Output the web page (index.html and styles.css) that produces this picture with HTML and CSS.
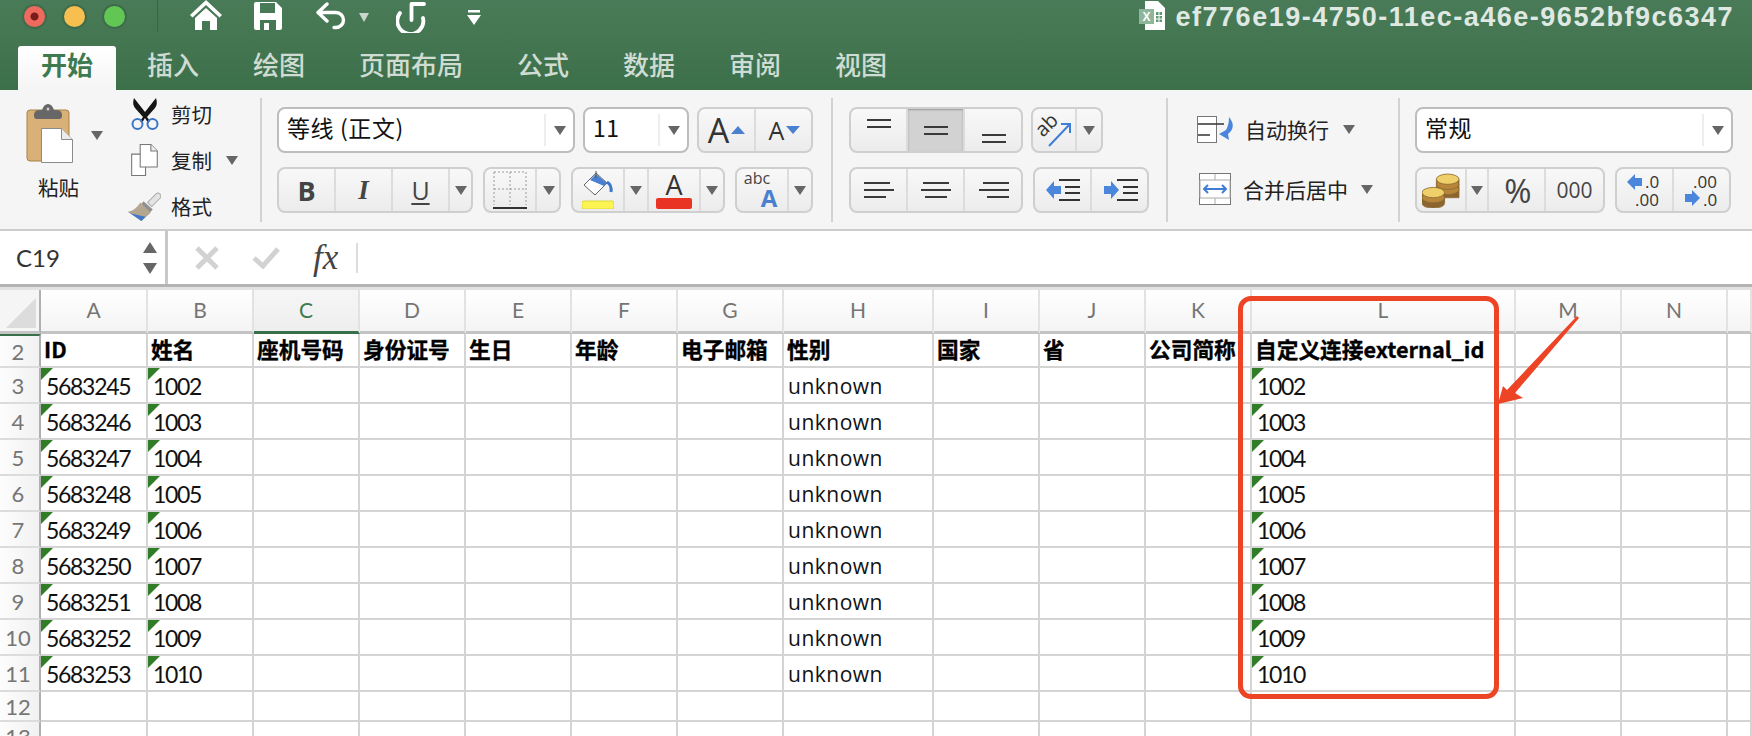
FILE: index.html
```html
<!DOCTYPE html>
<html lang="zh">
<head>
<meta charset="utf-8">
<title>ef776e19-4750-11ec-a46e-9652bf9c6347</title>
<link rel="stylesheet" href="styles.css">
</head>
<body>
<header class="titlebar">
  <div class="qat">
    <div class="lights"><span class="light red"></span><span class="light yellow"></span><span class="light green"></span></div>
    <span class="qat-sep"></span>
    <svg class="i-home" viewBox="0 0 32 30"><path fill="#fff" d="M16 0 32 15l-2.500 2.500L16 5 2.500 17.500 0 15zM5 18 16 8l11 10v12h-7v-9h-8v9H5z"/></svg>
    <svg class="i-save" viewBox="0 0 28 28"><path fill="#fff" fill-rule="evenodd" d="M2 0h20l6 6v20a2 2 0 0 1-2 2H2a2 2 0 0 1-2-2V2a2 2 0 0 1 2-2zM6 1v10h15V1zM6 18v10h16V18zM10 21h5v7h-5z"/></svg>
    <svg class="i-undo" viewBox="0 0 30 28"><path fill="none" stroke="#fff" stroke-width="3.400" stroke-linecap="round" stroke-linejoin="round" d="M11 2 2 10.500l9 8.500M2.500 10.500H20a7.500 7.500 0 0 1 0 15h-2"/></svg>
    <span class="qat-caret"></span>
    <svg class="i-redo" viewBox="0 0 30 31"><path fill="none" stroke="#fff" stroke-width="3.800" stroke-linecap="round" stroke-linejoin="round" d="M28 2H15.500v16M4 11A13 13 0 1 0 27 16"/></svg>
    <svg class="i-more" viewBox="0 0 14 15"><path fill="#fff" d="M1 0h12v2.500H1zM0 5h14l-7 10z"/></svg>
    <div class="doc-title">
      <svg class="i-doc" viewBox="0 0 26 29"><path fill="#fff" d="M6 0h13l7 7v22H6z"/><path fill="#8fb59b" d="M0 8h15v15H0z"/><text x="7.500" y="20" class="doc-x">X</text><path fill="#5f9a73" d="M17 11h6v10h-6z"/><path stroke="#fff" d="M17 14.500h6M17 18h6M20 11v10"/></svg>
      <span class="doc-name">ef776e19-4750-11ec-a46e-9652bf9c6347</span>
    </div>
  </div>
  <nav class="tabs">
    <span class="tab active">开始</span><span class="tab">插入</span><span class="tab">绘图</span><span class="tab">页面布局</span><span class="tab">公式</span><span class="tab">数据</span><span class="tab">审阅</span><span class="tab">视图</span>
  </nav>
</header>

<section class="ribbon">
  <div class="group g-clip">
    <div class="paste">
      <div class="paste-top">
        <svg class="i-paste" viewBox="0 0 47 59"><rect x="1" y="6" width="42" height="51" rx="3" fill="#d9b077" stroke="#a98347"/><path d="M8 11q0-5 6-5h2q2-6 6-6t6 6h2q6 0 6 5v1q0 3-3 3H11q-3 0-3-3z" fill="#676767"/><circle cx="22" cy="5" r="1.500" fill="#ccc"/><path d="M15.500 24.500h20l11 11v23h-31z" fill="#fff" stroke="#8b8b8b"/><path d="M35.500 24.500v11h11" fill="#ececec" stroke="#8b8b8b"/></svg>
        <span class="caret caret-paste"></span>
      </div>
      <span class="paste-label">粘贴</span>
    </div>
    <div class="clip-list">
      <div class="clip-item">
        <svg class="i-clip" viewBox="0 0 28 32"><path d="M3 0 14 14 25 0q2 6-1 10L16 19l3 4-2 2-3-5-3 5-2-2 3-4L4 10Q1 6 3 0z" fill="#151515"/><circle cx="6.500" cy="26" r="5" fill="none" stroke="#3c74c9" stroke-width="2"/><circle cx="21.500" cy="26" r="5" fill="none" stroke="#3c74c9" stroke-width="2"/></svg>
        <span>剪切</span>
      </div>
      <div class="clip-item">
        <svg class="i-clip" viewBox="0 0 28 30"><path d="M1.500 9.500h10l3 3v17h-13z" fill="#fff" stroke="#777"/><path d="M9.500.500h10l6 6v15h-16z" fill="#fff" stroke="#777"/><path d="M19.500.500v6h6" fill="#eee" stroke="#777"/></svg>
        <span>复制</span><span class="caret caret-copy"></span>
      </div>
      <div class="clip-item">
        <svg class="i-brush" viewBox="0 0 32 28"><path d="M19 10 27 2q2-2 4 0t0 4l-8 8z" fill="#e4e4e4" stroke="#aaa"/><path d="M15 9 24 17 20 21 12 13z" fill="#8f8f8f"/><path d="M12 10 22 20 13 28 0 19q7-1 12-9z" fill="#b5a68f"/><path d="M4 21 17 24 13 28 0 19z" fill="#3f78c9"/></svg>
        <span>格式</span>
      </div>
    </div>
  </div>

  <div class="group g-font">
    <div class="rrow">
      <div class="select w298"><span class="select-text">等线 (正文)</span><span class="select-arrow"><span class="caret"></span></span></div>
      <div class="select w106"><span class="select-text">11</span><span class="select-arrow"><span class="caret"></span></span></div>
      <div class="btns w116">
        <span class="btn w58 btn-a"><span class="big-a">A</span><span class="tri-up"></span></span>
        <span class="btn w58 btn-a"><span class="small-a">A</span><span class="tri-down"></span></span>
      </div>
    </div>
    <div class="rrow row2">
      <div class="btns w196">
        <span class="btn w58 fb">B</span>
        <span class="btn w58 fi">I</span>
        <span class="btn w58 fu">U</span>
        <span class="btn w22"><span class="caret"></span></span>
      </div>
      <div class="btns w78">
        <span class="btn w52">
          <svg class="i-border" viewBox="0 0 34 38"><path d="M1 1h32M1 18h32M1 1v33M17 1v33M33 1v33" fill="none" stroke="#999" stroke-dasharray="2 2"/><path d="M0 37h34" stroke="#333" stroke-width="2"/></svg>
        </span>
        <span class="btn w26"><span class="caret"></span></span>
      </div>
      <div class="btns w154">
        <span class="btn w52">
          <svg class="i-fill" viewBox="0 0 32 38"><path d="M14 2 2 14 13 24 25 12z" fill="#fff" stroke="#666"/><path d="M8 9 14 3l11 9-3 3z" fill="#4a80d0"/><path d="M25 11q5 3 4 10" fill="none" stroke="#3d78cc" stroke-width="3"/><path d="M14 0v7" stroke="#555"/><rect x="0" y="30" width="32" height="8" rx="2" fill="#fcf453" stroke="#dfd83a"/></svg>
        </span>
        <span class="btn w26"><span class="caret"></span></span>
        <span class="btn w52 col-a"><span class="col-a-l">A</span><span class="col-a-bar"></span></span>
        <span class="btn w24"><span class="caret"></span></span>
      </div>
      <div class="btns w78">
        <span class="btn w54 abc"><span class="abc-t">abc</span><span class="abc-a">A</span></span>
        <span class="btn w24"><span class="caret"></span></span>
      </div>
    </div>
  </div>

  <div class="group g-align">
    <div class="rrow">
      <div class="btns w174">
        <span class="btn w58 va va-top"><span class="ln l24"></span><span class="ln l24"></span></span>
        <span class="btn w58 va on"><span class="ln l24"></span><span class="ln l24"></span></span>
        <span class="btn w58 va va-bot"><span class="ln l24"></span><span class="ln l24"></span></span>
      </div>
      <div class="btns w72">
        <span class="btn w46"><svg class="i-orient" viewBox="0 0 34 36"><text x="0" y="0" class="orient-t" transform="translate(6 26) rotate(-45)">ab</text><path d="M12 34 33 12M24 12h9v9" fill="none" stroke="#3f7ed6" stroke-width="2"/></svg></span>
        <span class="btn w26"><span class="caret"></span></span>
      </div>
    </div>
    <div class="rrow row2">
      <div class="btns w174">
        <span class="btn w58 ha ha-l"><span class="ln l26"></span><span class="ln l30"></span><span class="ln l22"></span></span>
        <span class="btn w58 ha"><span class="ln l26"></span><span class="ln l30"></span><span class="ln l22"></span></span>
        <span class="btn w58 ha ha-r"><span class="ln l26"></span><span class="ln l30"></span><span class="ln l22"></span></span>
      </div>
      <div class="btns w116">
        <span class="btn w58"><svg class="i-indent" viewBox="0 0 34 22"><path d="M0 11 8 2v5h7v8H8v5z" fill="#4a86dc"/><path d="M13 1h21M19 8h15M19 14h15M13 21h21" stroke="#333" stroke-width="2"/></svg></span>
        <span class="btn w58"><svg class="i-indent" viewBox="0 0 34 22"><path d="M15 11 7 2v5H0v8h7v5z" fill="#4a86dc"/><path d="M13 1h21M19 8h15M19 14h15M13 21h21" stroke="#333" stroke-width="2"/></svg></span>
      </div>
    </div>
  </div>

  <div class="group g-wrap">
    <div class="wrap-item wrap-1">
      <svg class="i-wrap" viewBox="0 0 39 27"><rect x=".5" y=".5" width="19" height="26" fill="#fff" stroke="#777"/><path d="M1 8h26M1 19h12" stroke="#333" stroke-width="1.500"/><path d="M32 1q8 10-1 17l1 6-10-6 7-4q3-5 3-13z" fill="#4a86dc"/></svg>
      <span>自动换行</span><span class="caret"></span>
    </div>
    <div class="wrap-item wrap-2">
      <svg class="i-merge" viewBox="0 0 32 32"><rect x=".5" y=".5" width="31" height="31" fill="#fff" stroke="#777"/><path d="M1 7h30M1 25h30M16 1v6M16 25v6M1 7v18M31 7v18" stroke="#aaa"/><path d="M5 16h22M9 12l-4 4 4 4M23 12l4 4-4 4" fill="none" stroke="#3f7ed6" stroke-width="2"/></svg>
      <span>合并后居中</span><span class="caret"></span>
    </div>
  </div>

  <div class="group g-num">
    <div class="rrow">
      <div class="select w318"><span class="select-text">常规</span><span class="select-arrow"><span class="caret"></span></span></div>
    </div>
    <div class="rrow row2">
      <div class="btns w190">
        <span class="btn w50">
          <svg class="i-coins" viewBox="0 0 37 34"><g stroke="#8b6a2e" stroke-width=".800"><path d="M14 6v18h22V6z" fill="#8b6430"/><ellipse cx="25" cy="16" rx="11" ry="5" fill="#b8863b"/><ellipse cx="25" cy="11" rx="11" ry="5" fill="#b8863b"/><ellipse cx="25" cy="6" rx="11" ry="5" fill="#efcf69"/><path d="M0 19v10q0 5 11 5t11-5V19z" fill="#8b6430"/><ellipse cx="11" cy="24" rx="11" ry="5" fill="#b8863b"/><ellipse cx="11" cy="19" rx="11" ry="5" fill="#efcf69"/></g></svg>
        </span>
        <span class="btn w24"><span class="caret"></span></span>
        <span class="btn w58 pct">%</span>
        <span class="btn w58 thou">000</span>
      </div>
      <div class="btns w116">
        <span class="btn w58 dec">
          <svg class="i-dec" viewBox="0 0 36 36"><path d="M0 10 8 2v4h7v8H8v4z" fill="#4a86dc"/><text x="18" y="16" class="dec-t">.0</text><text x="8" y="34" class="dec-t">.00</text></svg>
        </span>
        <span class="btn w58 dec">
          <svg class="i-dec" viewBox="0 0 36 36"><text x="8" y="16" class="dec-t">.00</text><path d="M15 26l-8 8v-4H0v-8h7v-4z" fill="#4a86dc"/><text x="18" y="34" class="dec-t">.0</text></svg>
        </span>
      </div>
    </div>
  </div>
</section>

<section class="fbar">
  <div class="namebox">
    <span class="name">C19</span>
    <span class="spin"><span class="spin-up"></span><span class="spin-down"></span></span>
  </div>
  <svg class="i-x" viewBox="0 0 24 24"><path d="M2 2l20 20M22 2 2 22" stroke="#d2d2d2" stroke-width="5"/></svg>
  <svg class="i-ok" viewBox="0 0 28 22"><path d="M2 11l9 8L26 2" fill="none" stroke="#d2d2d2" stroke-width="5"/></svg>
  <span class="fx">fx</span>
  <span class="fsep"></span>
</section>

<section class="sheet">
  <div class="sheet-grid">
    <div class="corner"><span class="corner-tri"></span></div>
    <div class="ch">A</div><div class="ch">B</div><div class="ch sel">C</div><div class="ch">D</div><div class="ch">E</div><div class="ch">F</div><div class="ch">G</div><div class="ch">H</div><div class="ch">I</div><div class="ch">J</div><div class="ch">K</div><div class="ch">L</div><div class="ch">M</div><div class="ch">N</div><div class="ch"></div>

    <div class="rh rh-first">2</div><div class="c h">ID</div><div class="c h">姓名</div><div class="c h">座机号码</div><div class="c h">身份证号</div><div class="c h">生日</div><div class="c h">年龄</div><div class="c h">电子邮箱</div><div class="c h">性别</div><div class="c h">国家</div><div class="c h">省</div><div class="c h">公司简称</div><div class="c h">自定义连接external_id</div><div class="c"></div><div class="c"></div><div class="c"></div>

    <div class="rh">3</div><div class="c t">5683245</div><div class="c t">1002</div><div class="c"></div><div class="c"></div><div class="c"></div><div class="c"></div><div class="c"></div><div class="c u">unknown</div><div class="c"></div><div class="c"></div><div class="c"></div><div class="c t">1002</div><div class="c"></div><div class="c"></div><div class="c"></div>
    <div class="rh">4</div><div class="c t">5683246</div><div class="c t">1003</div><div class="c"></div><div class="c"></div><div class="c"></div><div class="c"></div><div class="c"></div><div class="c u">unknown</div><div class="c"></div><div class="c"></div><div class="c"></div><div class="c t">1003</div><div class="c"></div><div class="c"></div><div class="c"></div>
    <div class="rh">5</div><div class="c t">5683247</div><div class="c t">1004</div><div class="c"></div><div class="c"></div><div class="c"></div><div class="c"></div><div class="c"></div><div class="c u">unknown</div><div class="c"></div><div class="c"></div><div class="c"></div><div class="c t">1004</div><div class="c"></div><div class="c"></div><div class="c"></div>
    <div class="rh">6</div><div class="c t">5683248</div><div class="c t">1005</div><div class="c"></div><div class="c"></div><div class="c"></div><div class="c"></div><div class="c"></div><div class="c u">unknown</div><div class="c"></div><div class="c"></div><div class="c"></div><div class="c t">1005</div><div class="c"></div><div class="c"></div><div class="c"></div>
    <div class="rh">7</div><div class="c t">5683249</div><div class="c t">1006</div><div class="c"></div><div class="c"></div><div class="c"></div><div class="c"></div><div class="c"></div><div class="c u">unknown</div><div class="c"></div><div class="c"></div><div class="c"></div><div class="c t">1006</div><div class="c"></div><div class="c"></div><div class="c"></div>
    <div class="rh">8</div><div class="c t">5683250</div><div class="c t">1007</div><div class="c"></div><div class="c"></div><div class="c"></div><div class="c"></div><div class="c"></div><div class="c u">unknown</div><div class="c"></div><div class="c"></div><div class="c"></div><div class="c t">1007</div><div class="c"></div><div class="c"></div><div class="c"></div>
    <div class="rh">9</div><div class="c t">5683251</div><div class="c t">1008</div><div class="c"></div><div class="c"></div><div class="c"></div><div class="c"></div><div class="c"></div><div class="c u">unknown</div><div class="c"></div><div class="c"></div><div class="c"></div><div class="c t">1008</div><div class="c"></div><div class="c"></div><div class="c"></div>
    <div class="rh">10</div><div class="c t">5683252</div><div class="c t">1009</div><div class="c"></div><div class="c"></div><div class="c"></div><div class="c"></div><div class="c"></div><div class="c u">unknown</div><div class="c"></div><div class="c"></div><div class="c"></div><div class="c t">1009</div><div class="c"></div><div class="c"></div><div class="c"></div>
    <div class="rh">11</div><div class="c t">5683253</div><div class="c t">1010</div><div class="c"></div><div class="c"></div><div class="c"></div><div class="c"></div><div class="c"></div><div class="c u">unknown</div><div class="c"></div><div class="c"></div><div class="c"></div><div class="c t">1010</div><div class="c"></div><div class="c"></div><div class="c"></div>
    <div class="rh">12</div><div class="c"></div><div class="c"></div><div class="c"></div><div class="c"></div><div class="c"></div><div class="c"></div><div class="c"></div><div class="c"></div><div class="c"></div><div class="c"></div><div class="c"></div><div class="c"></div><div class="c"></div><div class="c"></div><div class="c"></div>
    <div class="rh">13</div><div class="c"></div><div class="c"></div><div class="c"></div><div class="c"></div><div class="c"></div><div class="c"></div><div class="c"></div><div class="c"></div><div class="c"></div><div class="c"></div><div class="c"></div><div class="c"></div><div class="c"></div><div class="c"></div><div class="c"></div>
  </div>
  <div class="callout-box"></div>
  <svg class="callout-arrow" viewBox="1490 310 95 100"><polygon points="1498,404 1503,386 1507,390 1577,316 1579,318 1515,393 1523,398" fill="#ee4426"/></svg>
</section>
</body>
</html>
```
FILE: styles.css
```css
* { box-sizing: border-box; }
html, body { margin: 0; padding: 0; }
body {
  width: 1752px; height: 736px; overflow: hidden; background: #fff;
  font-family: "Noto Sans CJK SC", "Noto Sans", sans-serif; color: #222;
}

/* title bar */
.titlebar { height: 90px; background: linear-gradient(#4a7b58, #3c7049); }
.qat { height: 46px; display: flex; align-items: flex-start; position: relative; }
.lights { display: flex; gap: 15px; margin: 4px 0 0 22px; }
.light { width: 25px; height: 25px; border-radius: 50%; border: 2px solid #3f6b4b; }
.red { background: radial-gradient(circle, #7a1c1a 0 3.500px, #ee6a5e 4.500px); }
.yellow { background: #f6bf4f; }
.green { background: #62c654; }
.qat-sep { width: 1px; height: 32px; background: #3a6645; margin-left: 30px; }
.i-home { width: 32px; height: 30px; margin-left: 32px; }
.i-save { width: 28px; height: 28px; margin: 2px 0 0 32px; }
.i-undo { width: 30px; height: 28px; margin: 2px 0 0 34px; }
.qat-caret { width: 0; height: 0; margin: 13px 0 0 13px; border: 5px solid transparent; border-top: 9px solid #c9d6cd; border-bottom: 0; }
.i-redo { width: 30px; height: 31px; margin: 2px 0 0 27px; }
.i-more { width: 14px; height: 15px; margin: 10px 0 0 41px; }
.doc-title { display: flex; margin-left: auto; padding-right: 18px; }
.i-doc { width: 26px; height: 29px; margin: 1px 11px 0 0; }
.doc-x { font: 700 12px "Liberation Sans", sans-serif; fill: #fff; text-anchor: middle; }
.doc-name { font: 700 27px/34px "Liberation Sans", Arial, sans-serif; letter-spacing: 1.500px; color: #dfe8e2; }
.tabs { display: flex; gap: 8px; height: 44px; padding-left: 18px; }
.tab { padding: 0 23px; font-size: 26px; line-height: 36px; font-weight: 500; color: #cfdcd3; white-space: nowrap; }
.tab.active { background: linear-gradient(#fff, #f5f5f5); color: #3d7a50; font-weight: 700; border-radius: 3px 3px 0 0; }

/* ribbon */
.ribbon { height: 141px; display: flex; padding: 8px 0 6px; background: #f5f5f5; border-bottom: 2px solid #ccc; }
.group { height: 124px; border-right: 2px solid #d2d2d2; flex: none; padding-top: 9px; }
.g-clip { width: 262px; padding: 0; display: flex; }
.g-font { width: 571px; padding-left: 15px; }
.g-align { width: 335px; padding-left: 16px; }
.g-wrap { width: 232px; padding-left: 29px; display: grid; grid-template-rows: 46px 46px; row-gap: 14px; align-content: start; padding-top: 8px; }
.g-num { width: 352px; padding-left: 15px; border-right: 0; }
.rrow { display: flex; height: 46px; gap: 8px; }
.row2 { margin-top: 14px; gap: 10px; }

.paste { width: 130px; padding: 6px 0 0 26px; }
.paste-top { display: flex; }
.i-paste { width: 47px; height: 59px; }
.caret-paste { margin: 27px 0 0 18px; }
.paste-label { display: block; font-size: 20.500px; line-height: 30px; margin: 9px 0 0 12px; }
.clip-list { margin-top: -7px; display: grid; grid-template-rows: repeat(3, 46px); }
.clip-item { display: flex; align-items: center; font-size: 20.500px; height: 46px; width: 120px; }
.i-clip { width: 30px; height: 32px; margin-right: 11px; }
.i-brush { width: 33px; height: 29px; margin: 0 10px 0 -2px; }
.caret-copy { margin-left: 14px; }

.caret { display: block; width: 0; height: 0; border: 6px solid transparent; border-top: 9px solid #666; border-bottom: 0; flex: none; }
.select { height: 46px; background: #fff; border: 2px solid #bdbdbd; border-radius: 8px; display: flex; align-items: center; justify-content: space-between; font-size: 23px; }
.select-text { padding: 0 0 7px 8px; line-height: 32px; color: #111; letter-spacing: .6px; }
.select-arrow { height: 32px; width: 29px; border-left: 2px solid #eee; display: flex; align-items: center; justify-content: center; }
.w298 { width: 298px; } .w106 { width: 106px; } .w318 { width: 318px; }
.btns { height: 46px; display: flex; border: 2px solid #cfcfcf; border-radius: 8px; background: linear-gradient(#f8f8f8, #ececec); }
.w116 { width: 116px; } .w196 { width: 196px; } .w78 { width: 78px; } .w154 { width: 154px; }
.w174 { width: 174px; } .w72 { width: 72px; } .w190 { width: 190px; }
.btn { display: flex; align-items: center; justify-content: center; border-right: 2px solid #dcdcdc; flex: none; height: 100%; }
.btn:last-child { border-right: 0; }
.w58 { width: 57px; } .w52 { width: 52px; } .w50 { width: 50px; } .w54 { width: 52px; } .w46 { width: 44px; }
.w26 { width: 24px; } .w24 { width: 22px; flex: 1; } .w22 { width: 20px; flex: 1; }
.btn-a { gap: 2px; color: #333; }
.big-a { font: 400 34px/1 "Open Sans", sans-serif; }
.small-a { font: 400 25px/1 "Open Sans", sans-serif; }
.tri-up { width: 0; height: 0; border: 7px solid transparent; border-bottom: 8px solid #4a80d0; border-top: 0; }
.tri-down { width: 0; height: 0; border: 7px solid transparent; border-top: 8px solid #4a80d0; border-bottom: 0; }
.fb { font: 700 27px/1 "Open Sans", sans-serif; color: #444; }
.fi { font: italic 700 27px/1 "Liberation Serif", serif; color: #444; }
.fu { font: 400 25px/26px "Open Sans", sans-serif; color: #444; text-decoration: underline; text-underline-offset: 3px; }
.i-border { width: 34px; height: 38px; }
.i-fill { width: 32px; height: 38px; }
.col-a { flex-direction: column; gap: 0; }
.col-a-l { font: 400 27px/26px "Open Sans", sans-serif; color: #333; }
.col-a-bar { width: 36px; height: 11px; background: #e93323; border-radius: 2px; }
.abc { flex-direction: column; align-items: center; }
.abc-t { font: 400 16px/15px "Open Sans", sans-serif; color: #444; margin-right: 10px; }
.abc-a { font: 700 24px/23px "Open Sans", sans-serif; color: #4a80d0; margin-left: 14px; }
.ln { display: block; height: 2px; background: #3a3a3a; flex: none; }
.va, .ha { flex-direction: column; gap: 5px; }
.va-top { justify-content: flex-start; padding-top: 10px; }
.va-bot { justify-content: flex-end; padding-bottom: 8px; }
.l24 { width: 24px; }
.on { background: #d2d2d2; box-shadow: inset 0 1px 2px #999; }
.l26 { width: 26px; } .l30 { width: 30px; } .l22 { width: 22px; }
.ha-l { align-items: flex-start; padding-left: 13px; }
.ha-r { align-items: flex-end; padding-right: 13px; }
.i-orient { width: 34px; height: 36px; overflow: visible; }
.orient-t { font: 400 20px "Open Sans", sans-serif; fill: #333; }
.i-indent { width: 34px; height: 22px; }
.wrap-item { display: flex; align-items: center; font-size: 21px; height: 46px; }
.i-wrap { width: 39px; height: 27px; margin-right: 9px; }
.wrap-1 .caret { margin-left: 14px; }
.i-merge { width: 32px; height: 32px; margin: 0 12px 0 2px; }
.wrap-2 .caret { margin-left: 13px; }
.i-coins { width: 38px; height: 35px; }
.pct { font: 400 33px/1 "Open Sans", sans-serif; color: #444; padding-left: 3px; }
.thou { font: 400 21px/1 "Open Sans", sans-serif; color: #444; }
.i-dec { width: 36px; height: 36px; overflow: visible; }
.dec-t { font: 400 17px "Open Sans", sans-serif; fill: #333; }

/* formula bar */
.fbar { height: 56px; display: flex; align-items: center; border-bottom: 3px solid #b4b4b4; background: #fff; }
.namebox { width: 168px; height: 100%; border-right: 3px solid #c8c8c8; display: flex; align-items: center; justify-content: space-between; padding: 0 8px 0 16px; }
.name { font: 400 24px "Lato", sans-serif; color: #333; }
.spin { display: flex; flex-direction: column; gap: 10px; }
.spin-up { width: 0; height: 0; border: 7px solid transparent; border-bottom: 11px solid #666; border-top: 0; }
.spin-down { width: 0; height: 0; border: 7px solid transparent; border-top: 11px solid #666; border-bottom: 0; }
.i-x { width: 24px; height: 24px; margin-left: 27px; }
.i-ok { width: 28px; height: 22px; margin-left: 33px; }
.fx { font: italic 400 35px "Liberation Serif", serif; color: #444; margin-left: 33px; width: 30px; }
.fsep { width: 2px; height: 30px; background: #ddd; margin-left: 13px; }

/* sheet */
.sheet { position: relative; border-top: 3px solid #e2e2e2; }
.sheet-grid {
  display: grid;
  grid-template-columns: 41px 107px repeat(6, 106px) 150px repeat(3, 106px) 264px 106px 106px 24px;
  grid-template-rows: 44px 34px repeat(9, 36px) 30px 30px;
}
.corner { background: #f5f5f5; border-right: 2px solid #b0b0b0; border-bottom: 3px solid #c4c4c4; padding: 8px 0 0 6px; }
.corner-tri { display: block; width: 30px; height: 30px; background: #dcdcdc; clip-path: polygon(100% 0, 100% 100%, 0 100%); }
.ch {
  background: linear-gradient(#fff, #f4f4f4); border-right: 2px solid #e2e2e2; border-bottom: 3px solid #c4c4c4;
  display: flex; align-items: center; justify-content: center; padding-bottom: 3px;
  font: 400 21px "Lato", sans-serif; color: #757575;
}
.ch.sel { background: linear-gradient(#f6f6f6, #eee); color: #3d7a50; border-bottom-color: #37704a; }
.rh {
  background: linear-gradient(to right, #fdfdfd, #f1f1f1); border-right: 2px solid #b0b0b0; border-bottom: 2px solid #dcdcdc;
  display: flex; align-items: center; justify-content: center; padding-right: 3px;
  font: 400 22px "Lato", sans-serif; color: #757575;
}
.rh-first { border-top: 2px solid #37704a; }
.c {
  position: relative; border-right: 2px solid #d4d4d4; border-bottom: 2px solid #d4d4d4;
  display: flex; align-items: center; padding: 1px 0 0 5px; white-space: nowrap; overflow: visible;
  font: 400 23px "Lato", sans-serif; letter-spacing: -1.300px; color: #111;
}
.c.t::before {
  content: ""; position: absolute; left: 0; top: 0; width: 12px; height: 12px;
  background: #307c27; clip-path: polygon(0 0, 100% 0, 0 100%);
}
.c.h { font: 700 21.700px "Noto Sans CJK SC", sans-serif; letter-spacing: 0; color: #000; padding: 0 0 3px 3px; -webkit-text-stroke: .35px #000; }
.c.u { font: 400 21px "Open Sans", sans-serif; letter-spacing: .500px; padding-left: 4px; }

.callout-box {
  position: absolute; left: 1238px; top: 6px; width: 261px; height: 403px;
  border: 5.500px solid #ee4426; border-radius: 13px; pointer-events: none;
}
.callout-arrow { position: absolute; left: 1490px; top: 20px; width: 95px; height: 100px; pointer-events: none; }
```
